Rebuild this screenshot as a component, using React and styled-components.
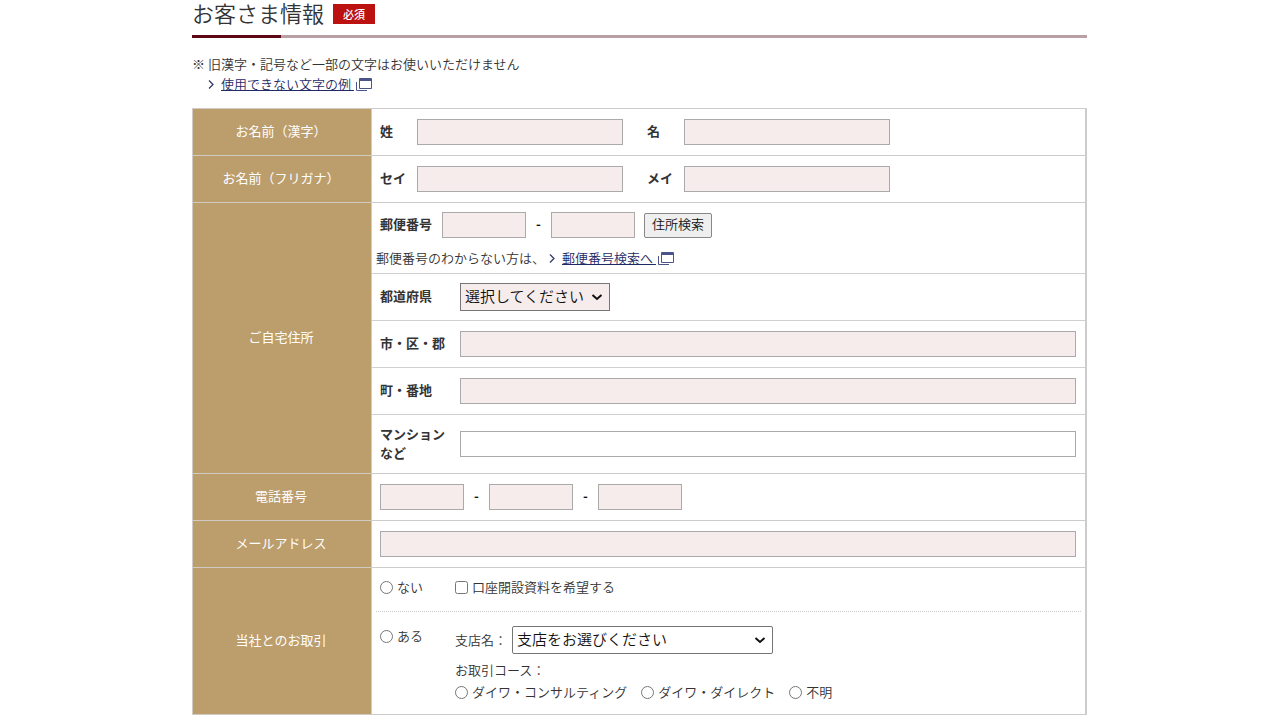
import styled, { createGlobalStyle } from "styled-components";

const GlobalStyle = createGlobalStyle`
  *, *::before, *::after {
    box-sizing: border-box;
  }

  body {
    margin: 0;
    background: #fff;
    color: #333;
    font-family: "Noto Sans CJK JP", "Liberation Sans", sans-serif;
    font-size: 13px;
    font-weight: 350;
    line-height: 20px;
  }
`;

const Page = styled.main`
  width: 100%;
  max-width: 896px;
  margin: 0 auto;
  padding-right: 1px;
`;

const Heading = styled.header`
  display: flex;
  align-items: flex-end;
  gap: 9px;
  height: 38px;
  padding-bottom: 11px;
  border-bottom: 3px solid;
  border-image: linear-gradient(to right, #5c0616 90px, #b9a0a4 90px) 1;
`;

const Title = styled.h2`
  margin: 0;
  font-size: 22px;
  font-weight: 350;
  line-height: 24px;
`;

const Required = styled.span`
  padding: 0 10px;
  background: #bb1111;
  color: #fff;
  font-size: 11px;
  font-weight: 500;
  line-height: 20px;
`;

const Notes = styled.div`
  margin: 16px 0 14px;
`;

const Note = styled.p`
  display: flex;
  align-items: center;
  margin: 0;
  padding-left: ${(props) => (props.$indent ? "12px" : "0")};
`;

const Chevron = styled.svg`
  width: 6px;
  height: 9px;
  margin: 0 7px 0 4px;
  fill: none;
  stroke: #333c66;
  stroke-width: 1.3;
`;

const TextLink = styled.a`
  color: #1f2a66;
  text-decoration: underline;
`;

const WindowSvg = styled.svg`
  width: 16px;
  height: 13px;
  margin-left: 2px;
  vertical-align: -2px;
  fill: none;
  stroke: #4a5488;
`;

const FormTable = styled.table`
  width: 100%;
  border: 1px solid #ccc;
  border-right-width: 2px;
  border-collapse: collapse;
`;

const Row = styled.tr`
  height: 47px;
`;

const HeadCell = styled.th`
  width: 179px;
  padding: 0 2px 2px 0;
  border: 1px solid #d0ccc4;
  background: #bc9d6c;
  color: #fff;
  font-weight: 400;
  text-align: center;
`;

const Cell = styled.td`
  padding: 0;
  border-top: 1px solid #ccc;
`;

const Line = styled.div`
  display: flex;
  align-items: center;
  min-height: 46px;
  padding: 0 9px 0 8px;
`;

const AddressLine = styled(Line)`
  border-top: 1px solid #d0d0d0;
  min-height: ${(props) => (props.$tall ? "59px" : "47px")};
`;

const ZipBlock = styled.div`
  padding: 9px 9px 5px 4px;
`;

const ZipFields = styled.div`
  display: flex;
  align-items: center;
  padding-left: 4px;
  margin-bottom: 10px;
`;

const labelWidths = { name: "37px", zip: "62px", address: "80px" };

const FieldLabel = styled.label`
  flex: none;
  width: ${(props) => labelWidths[props.$kind]};
  padding-bottom: 3px;
  font-weight: 700;
  line-height: 19px;
`;

const inputWidths = { name: "206px", number: "84px", wide: "100%" };

const TextInput = styled.input`
  width: ${(props) => inputWidths[props.$size]};
  height: 26px;
  margin: 0;
  padding: 2px 4px;
  border: 1px solid #aaa;
  border-radius: 0;
  background: ${(props) => (props.$optional ? "#fff" : "#f7ecec")};
  font: inherit;
`;

const NameField = styled.div`
  display: flex;
  align-items: center;

  & + & {
    margin-left: 24px;
  }
`;

const Dash = styled.span`
  width: 25px;
  padding-bottom: 2px;
  color: #111;
  font-weight: 700;
  text-align: center;
`;

const SearchButton = styled.button`
  height: 25px;
  margin-left: 9px;
  padding: 0 7px 2px;
  border: 1px solid #888;
  border-radius: 2px;
  background: #efefef;
  color: #111;
  font: inherit;
`;

const arrow =
  "data:image/svg+xml,%3Csvg xmlns='http://www.w3.org/2000/svg' width='12' height='8' viewBox='0 0 12 8'%3E%3Cpath d='M1.5 2 L6 6 L10.5 2' fill='none' stroke='%23111' stroke-width='2'/%3E%3C/svg%3E";

const Select = styled.select`
  appearance: none;
  width: ${(props) => (props.$branch ? "261px" : "150px")};
  height: 28px;
  padding: 0 20px 3px ${(props) => (props.$branch ? "4px" : "4px")};
  border: 1px solid #767676;
  border-radius: ${(props) => (props.$branch ? "2px" : "0")};
  background: ${(props) => (props.$branch ? "#fff" : "#f7ecec")}
    url("${arrow}") no-repeat right 6px center;
  color: #111;
  font-family: inherit;
  font-size: 15px;
  font-weight: inherit;
`;

const Dealing = styled.div`
  display: grid;
  grid-template-columns: 75px 1fr;
  margin: 0 4px;
  padding: 9px 4px 14px;

  & + & {
    padding: 14px 4px 11px;
    border-top: 1px dotted #ccc;
  }
`;

const Choice = styled.label`
  display: flex;
  align-items: center;
  gap: 4px;

  input {
    width: 13px;
    height: 13px;
    margin: 0;
  }
`;

const Branch = styled.div`
  display: flex;
  align-items: center;
  gap: 5px;
  margin-bottom: 5px;
`;

const Course = styled.fieldset`
  margin: 0;
  padding: 0;
  border: 0;
  line-height: 22px;

  legend {
    padding: 0;
  }
`;

const CourseList = styled.div`
  display: flex;
  gap: 14px;
`;

function ArrowLink({ children }) {
  return (
    <>
      <Chevron viewBox="0 0 6 9">
        <path d="M1 0.5 L5 4.5 L1 8.5" />
      </Chevron>
      <TextLink href="#">
        {children}{" "}
        <WindowSvg viewBox="0 0 16 13">
          <path d="M3.5 0.5 H15.5 V10.5 H3.5 Z M3.5 1.5 H15.5 M3.5 2.5 H15.5 M0.5 4 V12.5 H11" />
        </WindowSvg>
      </TextLink>
    </>
  );
}

function NameRow({ title, fields }) {
  return (
    <Row>
      <HeadCell scope="row">{title}</HeadCell>
      <Cell>
        <Line>
          {fields.map(({ id, label }) => (
            <NameField key={id}>
              <FieldLabel $kind="name" htmlFor={id}>
                {label}
              </FieldLabel>
              <TextInput $size="name" type="text" id={id} />
            </NameField>
          ))}
        </Line>
      </Cell>
    </Row>
  );
}

function App() {
  return (
    <>
      <GlobalStyle />
      <Page>
        <Heading>
          <Title>お客さま情報</Title>
          <Required>必須</Required>
        </Heading>

        <Notes>
          <Note>※ 旧漢字・記号など一部の文字はお使いいただけません</Note>
          <Note $indent>
            <ArrowLink>使用できない文字の例</ArrowLink>
          </Note>
        </Notes>

        <form onSubmit={(e) => e.preventDefault()}>
          <FormTable>
            <tbody>
              <NameRow
                title="お名前（漢字）"
                fields={[
                  { id: "sei", label: "姓" },
                  { id: "mei", label: "名" },
                ]}
              />
              <NameRow
                title="お名前（フリガナ）"
                fields={[
                  { id: "sei-kana", label: "セイ" },
                  { id: "mei-kana", label: "メイ" },
                ]}
              />
              <Row>
                <HeadCell scope="row">ご自宅住所</HeadCell>
                <Cell>
                  <ZipBlock>
                    <ZipFields>
                      <FieldLabel $kind="zip" htmlFor="zip1">
                        郵便番号
                      </FieldLabel>
                      <TextInput $size="number" type="text" id="zip1" />
                      <Dash>-</Dash>
                      <TextInput
                        $size="number"
                        type="text"
                        aria-label="郵便番号 下4桁"
                      />
                      <SearchButton type="button">住所検索</SearchButton>
                    </ZipFields>
                    <Note>
                      郵便番号のわからない方は、
                      <ArrowLink>郵便番号検索へ</ArrowLink>
                    </Note>
                  </ZipBlock>
                  <AddressLine>
                    <FieldLabel $kind="address" htmlFor="pref">
                      都道府県
                    </FieldLabel>
                    <Select id="pref">
                      <option>選択してください</option>
                    </Select>
                  </AddressLine>
                  <AddressLine>
                    <FieldLabel $kind="address" htmlFor="city">
                      市・区・郡
                    </FieldLabel>
                    <TextInput $size="wide" type="text" id="city" />
                  </AddressLine>
                  <AddressLine>
                    <FieldLabel $kind="address" htmlFor="town">
                      町・番地
                    </FieldLabel>
                    <TextInput $size="wide" type="text" id="town" />
                  </AddressLine>
                  <AddressLine $tall>
                    <FieldLabel $kind="address" htmlFor="building">
                      マンション
                      <br />
                      など
                    </FieldLabel>
                    <TextInput
                      $size="wide"
                      $optional
                      type="text"
                      id="building"
                    />
                  </AddressLine>
                </Cell>
              </Row>
              <Row>
                <HeadCell scope="row">電話番号</HeadCell>
                <Cell>
                  <Line>
                    <TextInput $size="number" type="tel" aria-label="市外局番" />
                    <Dash>-</Dash>
                    <TextInput $size="number" type="tel" aria-label="市内局番" />
                    <Dash>-</Dash>
                    <TextInput
                      $size="number"
                      type="tel"
                      aria-label="加入者番号"
                    />
                  </Line>
                </Cell>
              </Row>
              <Row>
                <HeadCell scope="row">
                  <label htmlFor="email">メールアドレス</label>
                </HeadCell>
                <Cell>
                  <Line>
                    <TextInput $size="wide" type="email" id="email" />
                  </Line>
                </Cell>
              </Row>
              <Row>
                <HeadCell scope="row">当社とのお取引</HeadCell>
                <Cell>
                  <Dealing>
                    <Choice>
                      <input type="radio" name="dealing" />
                      ない
                    </Choice>
                    <Choice>
                      <input type="checkbox" name="document" />
                      口座開設資料を希望する
                    </Choice>
                  </Dealing>
                  <Dealing>
                    <div>
                      <Choice>
                        <input type="radio" name="dealing" />
                        ある
                      </Choice>
                    </div>
                    <div>
                      <Branch>
                        <label htmlFor="branch">支店名：</label>
                        <Select $branch id="branch">
                          <option>支店をお選びください</option>
                        </Select>
                      </Branch>
                      <Course>
                        <legend>お取引コース：</legend>
                        <CourseList>
                          {[
                            "ダイワ・コンサルティング",
                            "ダイワ・ダイレクト",
                            "不明",
                          ].map((course) => (
                            <Choice key={course}>
                              <input type="radio" name="course" />
                              {course}
                            </Choice>
                          ))}
                        </CourseList>
                      </Course>
                    </div>
                  </Dealing>
                </Cell>
              </Row>
            </tbody>
          </FormTable>
        </form>
      </Page>
    </>
  );
}

export default App;
